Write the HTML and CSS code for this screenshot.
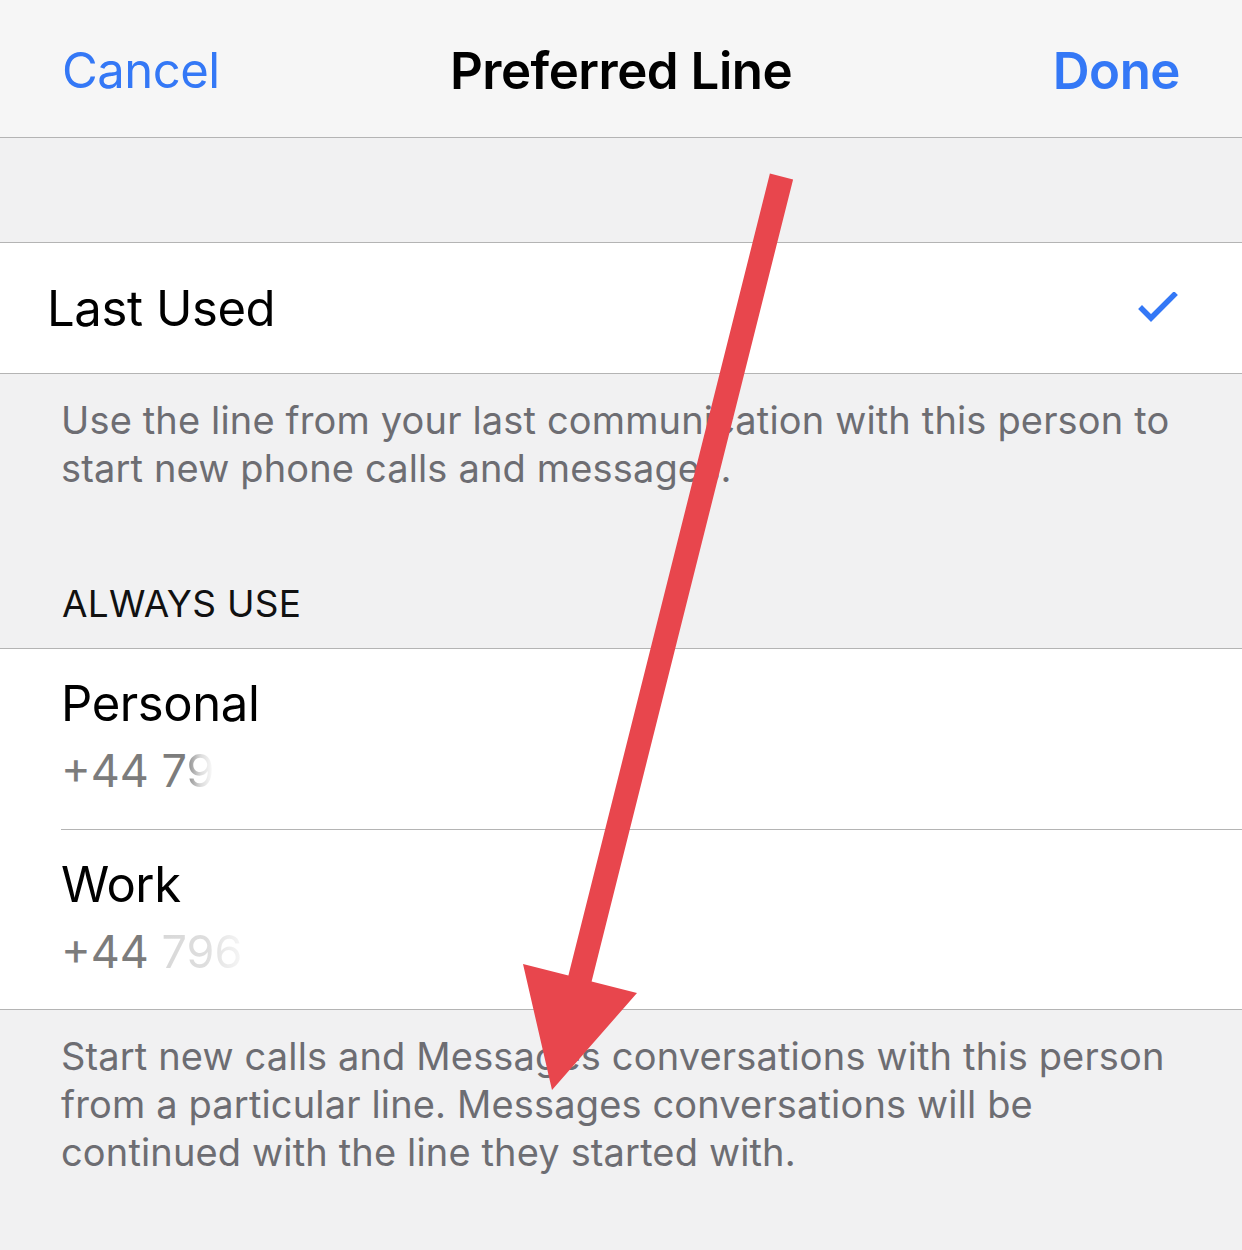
FILE: index.html
```html
<!DOCTYPE html>
<html lang="en">

<head>
  <meta charset="UTF-8">
  <title>Preferred Line</title>
  <link rel="stylesheet" href="styles.css">
</head>

<body>
  <div class="screen">
    <div class="nav-bar">
      <span class="nav-button">Cancel</span>
      <span class="nav-title">Preferred Line</span>
      <span class="nav-button done">Done</span>
    </div>

    <div class="spacer"></div>

    <div class="group">
      <div class="row last-used">
        <span class="row-title">Last Used</span>
        <svg class="check" width="42" height="34" viewBox="0 0 42 34">
          <path d="M4 17 L13 26 L36 3" fill="none" stroke="#3478f6" stroke-width="5.5" stroke-linecap="square" stroke-linejoin="miter"/>
        </svg>
      </div>
    </div>

    <p class="footer-text first">Use the line from your last communication with this person to<br>start new phone calls and messages.</p>

    <div class="section-header">ALWAYS USE</div>

    <div class="group">
      <div class="row line-row">
        <span class="row-title">Personal</span>
        <span class="number">+44 7<span class="fade-a">9</span></span>
      </div>
      <div class="row line-row">
        <span class="row-title">Work</span>
        <span class="number">+44 <span class="fade-b">796</span></span>
      </div>
    </div>

    <p class="footer-text">Start new calls and Messages conversations with this person<br>from a particular line. Messages conversations will be<br>continued with the line they started with.</p>

    <!-- annotation arrow drawn on top of the screenshot -->
    <svg class="arrow" width="1242" height="1250" viewBox="0 0 1242 1250">
      <polygon fill="#e8464d"
        points="769.9,173.6 793.1,179.4 591.6,981.4 637,993 552,1090 523,964 568.4,975.6"/>
    </svg>
  </div>
</body>

</html>
```

FILE: styles.css
```css
* {
  margin: 0;
  padding: 0;
  box-sizing: border-box;
}

body {
  font-family: Inter, 'Liberation Sans', sans-serif;
  background: #f1f1f2;
  width: 1242px;
  height: 1250px;
  overflow: hidden;
}

.screen {
  position: relative;
  height: 1250px;
}

.nav-bar {
  height: 138px;
  background: #f6f6f6;
  border-bottom: 1px solid #b4b4b4;
  display: flex;
  align-items: center;
  justify-content: space-between;
  padding: 4px 62px 0 62px;
  font-size: 51px;
  letter-spacing: -0.5px;
}

.nav-button {
  color: #3478f6;
  width: 200px;
  font-size: 49px;
}

.nav-button.done {
  font-size: 51px;
  font-weight: 600;
  text-align: right;
}

.nav-title {
  font-weight: 600;
  color: #000;
}

.spacer {
  height: 104px;
}

.group {
  background: #fff;
  border-top: 1px solid #b4b4b4;
  border-bottom: 1px solid #b4b4b4;
}

.row {
  display: flex;
  color: #000;
}

.row-title {
  font-size: 49px;
  letter-spacing: -0.4px;
}

.last-used {
  height: 130px;
  align-items: center;
  justify-content: space-between;
  padding: 0 62px 0 47px;
}

.check {
  margin-top: 2px;
}

.line-row {
  flex-direction: column;
  height: 180px;
  margin-left: 61px;
  padding-top: 25px;
}

.line-row + .line-row {
  border-top: 1px solid #b4b4b4;
}

.number {
  font-size: 45px;
  color: #7c7c7c;
  margin-top: 10px;
}

.fade-a {
  background: linear-gradient(90deg, #8a8a8a 0%, #dcdcdc 50%, #ffffff 100%);
  -webkit-background-clip: text;
  -webkit-text-fill-color: transparent;
}

.fade-b {
  background: linear-gradient(90deg, #d8d8d8 0%, #dedede 55%, #f6f6f6 100%);
  -webkit-background-clip: text;
  -webkit-text-fill-color: transparent;
}

.footer-text {
  font-size: 38px;
  line-height: 48px;
  color: #6d6d72;
  letter-spacing: 0.15px;
  padding: 22px 61px 0 61px;
}

.section-header {
  font-size: 37px;
  color: #111;
  padding: 0 62px;
  margin-top: 89px;
  height: 67px;
  letter-spacing: 0.3px;
}

.arrow {
  position: absolute;
  top: 0;
  left: 0;
  pointer-events: none;
}
```
